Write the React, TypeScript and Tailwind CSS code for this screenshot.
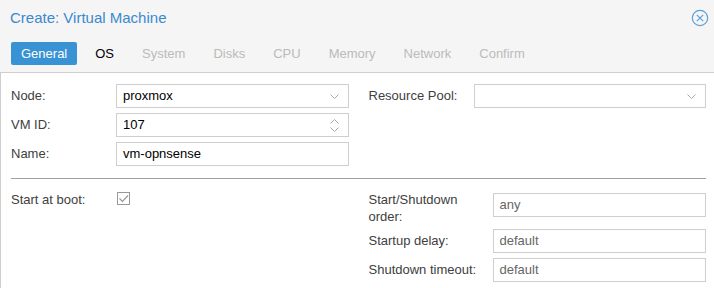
import React from 'react'

const tabs = ['General', 'OS', 'System', 'Disks', 'CPU', 'Memory', 'Network', 'Confirm']

const Chevron = ({ up = false }: { up?: boolean }) => (
  <svg width="9" height="5" viewBox="0 0 9 5" className="block">
    <path
      d={up ? 'M0.5 4.5 L4.5 0.5 L8.5 4.5' : 'M0.5 0.5 L4.5 4.5 L8.5 0.5'}
      fill="none"
      stroke="#a8a8a8"
      strokeWidth="1"
    />
  </svg>
)

const Combo = ({ value, spinner = false }: { value?: string; spinner?: boolean }) => (
  <div className="flex-1 h-[24px] border border-[#cfcfcf] bg-white flex items-center pl-[6px] pr-[9px]">
    <span className="flex-1 text-[13px] text-black">{value}</span>
    {spinner ? (
      <div className="flex flex-col gap-[3px]">
        <Chevron up />
        <Chevron />
      </div>
    ) : (
      <Chevron />
    )}
  </div>
)

const TextField = ({ value, empty = false }: { value: string; empty?: boolean }) => (
  <div className="flex-1 h-[24px] border border-[#cfcfcf] bg-white flex items-center pl-[6px]">
    <span className={empty ? 'text-[13px] text-[#666]' : 'text-[13px] text-black'}>{value}</span>
  </div>
)

const Row = ({ label, labelW, children }: { label: string; labelW: string; children: React.ReactNode }) => (
  <div className="flex items-center">
    <div className={`${labelW} shrink-0 text-[13px] text-[#404040]`}>{label}</div>
    {children}
  </div>
)

export default function App() {
  return (
    <div
      className="w-[714px] h-[288px] overflow-hidden bg-[#f5f5f5] flex flex-col"
      style={{ fontFamily: '"Liberation Sans", Arial, sans-serif' }}
    >
      <div className="h-[36px] flex items-center justify-between pl-[10px] pr-[5px]">
        <span className="text-[15px] text-[#3a89d0]">Create: Virtual Machine</span>
        <svg width="18" height="18" viewBox="0 0 18 18">
          <circle cx="9" cy="9" r="7.7" fill="none" stroke="#5c9fd9" strokeWidth="1.2" />
          <path d="M5.8 5.8 L12.2 12.2 M12.2 5.8 L5.8 12.2" stroke="#5c9fd9" strokeWidth="1.2" />
        </svg>
      </div>
      <div className="h-[36px] flex items-start pt-[6px] pl-[11px] gap-[8px]">
        {tabs.map((t, i) => (
          <div
            key={t}
            className={
              i === 0
                ? 'h-[23px] px-[10px] rounded-[2px] bg-[#3892d4] text-white text-[13px] flex items-center'
                : i === 1
                ? 'h-[23px] px-[10px] text-black text-[13px] flex items-center'
                : 'h-[23px] px-[10px] text-[#bbbbbb] text-[13px] flex items-center'
            }
          >
            {t}
          </div>
        ))}
      </div>
      <div className="flex-1 bg-white border-t border-l border-[#cfcfcf] pt-[11px] pl-[10px] pr-[8px]">
        <div className="flex gap-[20px]">
          <div className="flex-1 flex flex-col gap-[5px]">
            <Row label="Node:" labelW="w-[105px]">
              <Combo value="proxmox" />
            </Row>
            <Row label="VM ID:" labelW="w-[105px]">
              <Combo value="107" spinner />
            </Row>
            <Row label="Name:" labelW="w-[105px]">
              <TextField value="vm-opnsense" />
            </Row>
          </div>
          <div className="flex-1 flex flex-col gap-[5px]">
            <Row label="Resource Pool:" labelW="w-[105px]">
              <Combo />
            </Row>
          </div>
        </div>
        <div className="mt-[12px] h-px bg-[#a0a0a0]" />
        <div className="flex gap-[20px] pt-[12px]">
          <div className="flex-1 flex items-start">
            <div className="w-[106px] shrink-0 text-[13px] text-[#404040] leading-[17px] pt-[0px]">
              Start at boot:
            </div>
            <div className="mt-[1px] w-[13px] h-[13px] border border-[#999] flex items-center justify-center">
              <svg width="11" height="11" viewBox="0 0 11 11">
                <path d="M1.5 5.5 L4.5 8.5 L10 2.5" fill="none" stroke="#999" strokeWidth="1.2" />
              </svg>
            </div>
          </div>
          <div className="flex-1 flex flex-col gap-[4px]">
            <div className="flex items-start">
              <div className="w-[124px] shrink-0 text-[13px] text-[#404040] leading-[17px] pr-[20px]">
                Start/Shutdown order:
              </div>
              <div className="flex-1 mt-[2px] flex">
                <TextField value="any" empty />
              </div>
            </div>
            <Row label="Startup delay:" labelW="w-[124px]">
              <TextField value="default" empty />
            </Row>
            <div className="mt-[1px]">
              <Row label="Shutdown timeout:" labelW="w-[124px]">
                <TextField value="default" empty />
              </Row>
            </div>
          </div>
        </div>
      </div>
    </div>
  )
}
